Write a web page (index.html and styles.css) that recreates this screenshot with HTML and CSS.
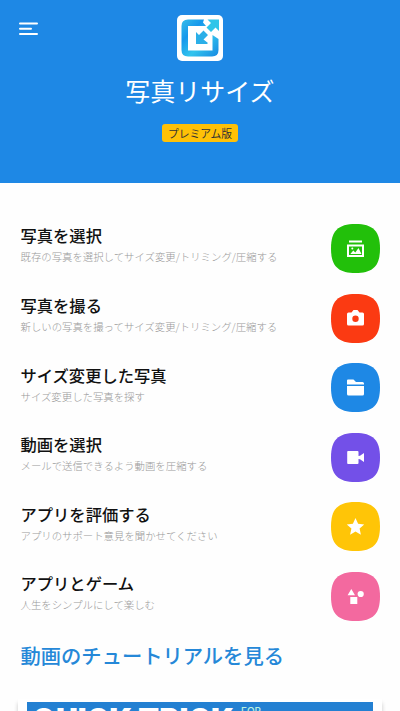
FILE: index.html
```html
<!DOCTYPE html>
<html lang="ja">
<head>
<meta charset="utf-8">
<title>写真リサイズ</title>
<link rel="stylesheet" href="styles.css">
</head>
<body>
<header class="hero">
  <svg class="menu" viewBox="0 0 20 14"><path d="M1 1.500h17M1 6.800h11M1 12h17"/></svg>
  <svg class="logo" viewBox="0 0 46 46">
    <defs><linearGradient id="ring" x1="0" y1="0" x2="1" y2="1"><stop offset="0" stop-color="#35bde9"/><stop offset=".3" stop-color="#1798ec"/><stop offset=".6" stop-color="#32c4ed"/><stop offset="1" stop-color="#1688e2"/></linearGradient></defs>
    <rect width="46" height="46" rx="5" fill="#fff"/>
    <path d="M27 4.500H11Q4.500 4.500 4.500 11v24Q4.500 41.500 11 41.500h24Q41.500 41.500 41.500 35V24l-6-4v15.500H11V11h18l-3-3.500z" fill="url(#ring)"/>
    <path d="M30.500 4.500H42v11.500l-3.500-3.500-4.500 4.500-4.500-4.500 4.500-4.500z" fill="#2fc5e9"/>
    <path d="M19 17l3 3 4.500-4.500 4.500 4.500-4.500 4.500 4.500 3.500-1 1H19z" fill="#2bafe8"/>
  </svg>
  <h1>写真リサイズ</h1>
  <span class="badge">プレミアム版</span>
</header>
<main>
  <svg class="defs"><symbol id="tile" viewBox="0 0 49 49"><path d="M24.500 0C42 0 49 7 49 24.500S42 49 24.500 49 0 42 0 24.500 7 0 24.500 0z"/></symbol></svg>
  <section class="row"><div class="text"><h2>写真を選択</h2><p>既存の写真を選択してサイズ変更/トリミング/圧縮する</p></div>
    <svg class="tile green" viewBox="0 0 49 49"><use href="#tile"/><g class="glyph"><path d="M18 16.500h13v2H18z"/><path fill-rule="evenodd" d="M16 20.500h17v12.500H16zM18 22.500v8.500h13v-8.500z"/><path d="M19.300 30l3-3.500 2 2 3.200-4.500 3 6z"/><circle cx="21.300" cy="24.500" r="1"/></g></svg></section>
  <section class="row"><div class="text"><h2>写真を撮る</h2><p>新しいの写真を撮ってサイズ変更/トリミング/圧縮する</p></div>
    <svg class="tile red" viewBox="0 0 49 49"><use href="#tile"/><path class="glyph" fill-rule="evenodd" d="M17.500 18.500h3l2-2.500h4l2 2.500h3q1.500 0 1.500 1.500v10q0 1.500-1.500 1.500h-14q-1.500 0-1.500-1.500v-10q0-1.500 1.500-1.500zM24.500 21.600a3.200 3.200 0 1 0 0 6.400 3.200 3.200 0 1 0 0-6.400z"/></svg></section>
  <section class="row"><div class="text"><h2>サイズ変更した写真</h2><p>サイズ変更した写真を探す</p></div>
    <svg class="tile blue" viewBox="0 0 49 49"><use href="#tile"/><path class="glyph" d="M16 21.500V17.500q0-1 1-1h5.500l2.500 2.500h6.500q1.500 0 1.500 1.500v1zM16 23h17v8q0 1.500-1.500 1.500H17.500q-1.500 0-1.500-1.500z"/></svg></section>
  <section class="row"><div class="text"><h2>動画を選択</h2><p>メールで送信できるよう動画を圧縮する</p></div>
    <svg class="tile purple" viewBox="0 0 49 49"><use href="#tile"/><path class="glyph" d="M17 18h9.500q1 0 1 1v4l1.500-.3 4-2.700v9l-4-2.700-1.500-.3v4q0 1-1 1H17q-.8 0-.8-1V19q0-1 .8-1z"/></svg></section>
  <section class="row"><div class="text"><h2>アプリを評価する</h2><p>アプリのサポート意見を聞かせてください</p></div>
    <svg class="tile yellow" viewBox="0 0 49 49"><use href="#tile"/><path class="glyph" d="M24.500 16l2.600 5.800 6.100.6-4.600 4.200 1.300 6.200-5.400-3.200-5.400 3.200 1.300-6.200-4.600-4.200 6.100-.6z"/></svg></section>
  <section class="row"><div class="text"><h2>アプリとゲーム</h2><p>人生をシンプルにして楽しむ</p></div>
    <svg class="tile pink" viewBox="0 0 49 49"><use href="#tile"/><g class="glyph"><path d="M20.300 17l3.700 6.200h-7.400zM19.300 25h7v7h-7z"/><circle cx="29.700" cy="22" r="3.100"/></g></svg></section>
  <h3>動画のチュートリアルを見る</h3>
  <div class="card"><div class="banner">
    <svg viewBox="0 0 346 40"><text class="quick" x="5" y="31" textLength="202" lengthAdjust="spacingAndGlyphs">QUICK TRICK</text><text class="for" x="214" y="13">FOR</text></svg>
  </div></div>
</main>
</body>
</html>
```
FILE: styles.css
```css
* { box-sizing: border-box; }
body { margin: 0; height: 711px; overflow: hidden; background: #fefefe; font-family: "Noto Sans CJK JP", sans-serif; }
h1, h2, h3, p { margin: 0; }
.hero { position: relative; height: 183px; background: #1e88e5; display: flex; flex-direction: column; align-items: center; padding-top: 15px; }
.menu { position: absolute; left: 18.5px; top: 22px; width: 20px; height: 14px; fill: none; stroke: #fff; stroke-width: 2; stroke-linecap: round; }
.logo { width: 46px; height: 46px; }
h1 { margin-top: 11px; height: 36px; line-height: 36px; font-size: 25px; font-weight: 400; color: #fff; white-space: nowrap; }
.badge { margin-top: 16px; width: 76px; height: 18px; line-height: 18px; border-radius: 3px; background: #ffc107; color: #333; font-size: 10.8px; text-align: center; white-space: nowrap; }
.defs { display: none; }
main { height: 528px; overflow: hidden; padding: 30.7px 20px 0 20.5px; }
.row { height: 69.6px; display: flex; justify-content: space-between; align-items: center; white-space: nowrap; }
.text { padding-bottom: 7px; }
h2 { font-size: 16.3px; line-height: 24px; font-weight: 500; color: #111; }
p { font-size: 10.4px; line-height: 18px; color: #999; font-weight: 300; padding-top: 1px; }
.tile { width: 49px; height: 49px; flex: none; }
.glyph { fill: #fff; }
.green { fill: #22c00a; }
.red { fill: #fb3a12; }
.blue { fill: #1e88e5; }
.purple { fill: #7350e8; }
.yellow { fill: #ffc507; }
.pink { fill: #f3699f; }
h3 { margin-top: 7.7px; height: 32px; line-height: 32px; font-size: 20.3px; font-weight: 500; color: #2588d8; white-space: nowrap; }
.card { margin: 28.5px -2px 0 -2.5px; padding: 3px 9px 0; height: 12px; background: #fff; box-shadow: 0 4px 4px rgba(0,0,0,.22); }
.banner { height: 9px; overflow: hidden; background: #2380d2; }
.banner svg { display: block; width: 346px; height: 40px; }
.quick { font: 900 34px Inter, sans-serif; fill: #fff; }
.for { font: 500 10px Inter, sans-serif; fill: #b9f0df; }
```
